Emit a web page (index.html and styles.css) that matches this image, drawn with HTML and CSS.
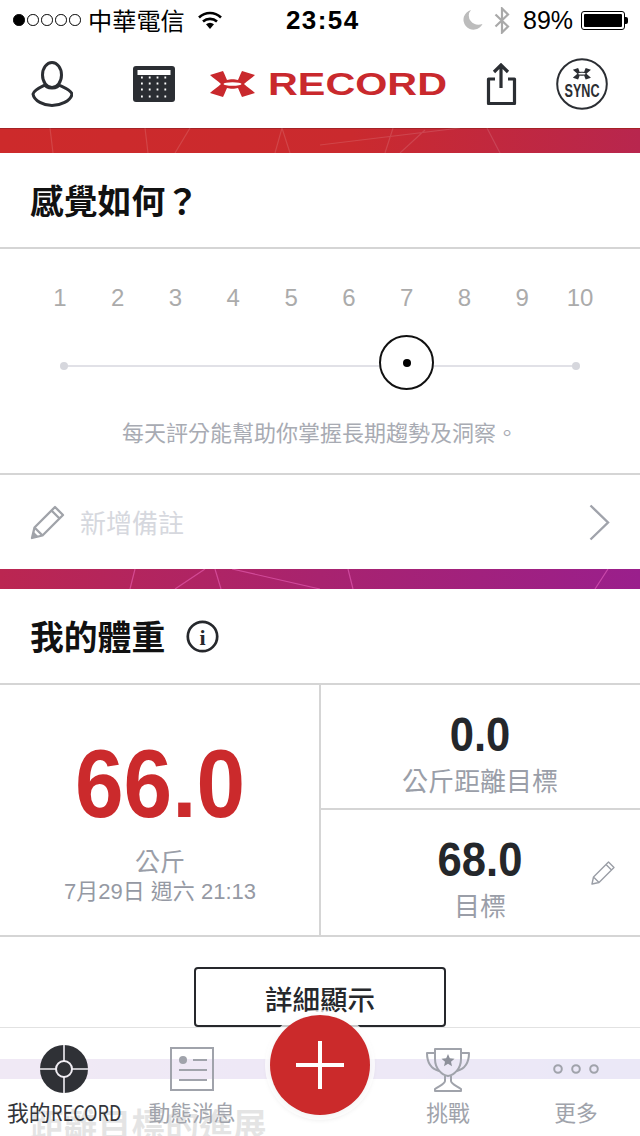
FILE: index.html
```html
<!DOCTYPE html>
<html lang="zh-Hant">
<head>
<meta charset="utf-8">
<title>UA Record</title>
<link rel="stylesheet" href="styles.css">
</head>
<body>
<div class="page">
  <div class="status">
    <div class="dots"><i class="dot on"></i><i class="dot"></i><i class="dot"></i><i class="dot"></i><i class="dot"></i></div>
    <span class="carrier">中華電信</span>
    <svg class="wifi" width="24" height="18" viewBox="0 0 24 18"><path d="M1 6.5C7.5 .5 16.500 .5 23 6.500" fill="none" stroke="#000" stroke-width="2.600"/><path d="M5 10.500C9 7 15 7 19 10.500" fill="none" stroke="#000" stroke-width="2.600"/><path d="M8 13.200C10.500 11.200 13.500 11.200 16 13.200L12 18Z" fill="#000"/></svg>
    <span class="time">23:54</span>
    <svg class="moon" width="20" height="20" viewBox="0 0 20 20"><path d="M8 0A10 10 0 1 0 19.500 14A10 9 0 0 1 8 0Z" fill="#bcbcbc"/></svg>
    <svg class="bt" width="16" height="27" viewBox="0 0 16 27"><path d="M1.500 7.500L14 19.500L8 25.500V1.500L14 7.500L1.500 19.500" fill="none" stroke="#a9a9a9" stroke-width="2.200"/></svg>
    <span class="pct">89%</span>
    <div class="battery"><div class="batt-body"><div class="batt-fill"></div></div><div class="batt-tip"></div></div>
  </div>

  <nav class="nav">
    <svg class="i-person" width="42" height="46" viewBox="0 0 42 46"><ellipse cx="21" cy="14" rx="9.500" ry="12.500" fill="none" stroke="#2b2e33" stroke-width="3"/><path d="M14 24C10 26 3 29 2 33C3 40 13 44.500 21 44.500C29 44.500 40 40 41 33C40 29 32 26 28 24C27 28 15 28 14 24Z" fill="none" stroke="#2b2e33" stroke-width="3" stroke-linejoin="round"/></svg>
    <svg class="i-cal" width="42" height="36" viewBox="0 0 42 36"><rect width="42" height="36" rx="3" fill="#2b2e33"/><rect x="4.500" y="4" width="33" height="5" fill="#fff"/><g stroke="#fff" stroke-width="1.800" stroke-dasharray="1.800 6"><path d="M8 11.500H37"/><path d="M8 17.500H37"/><path d="M8 23.500H37"/><path d="M8 30.500H37"/></g></svg>
    <svg class="logo" width="238" height="26" viewBox="0 0 238 26">
      <path d="M1 4L14 0C16 4 17 7 18 9C21 8 26 8 29 9C30 7 31 4 33 0L46 4C43 7 38 10 35 13C38 16 43 19 46 22L33 26C31 22 30 19 29 17C26 18 21 18 18 17C17 19 16 22 14 26L1 22C4 19 9 16 12 13C9 10 4 7 1 4Z" fill="#c9292d"/>
      <ellipse cx="23.500" cy="13" rx="9" ry="1.800" fill="#fff"/>
      <text class="logo-text" x="59" y="24" textLength="179" lengthAdjust="spacingAndGlyphs">RECORD</text>
    </svg>
    <svg class="i-share" width="31" height="42" viewBox="0 0 31 42"><path d="M9 16H2.500V40.500H28.500V16H22" fill="none" stroke="#2b2e33" stroke-width="3.200" stroke-linejoin="round"/><path d="M15 2V25M8 9L15 2L22 9" fill="none" stroke="#2b2e33" stroke-width="3.200"/></svg>
    <svg class="i-sync" width="52" height="54" viewBox="0 0 52 54">
      <circle cx="26" cy="27" r="24.800" fill="#fff" stroke="#2b2e33" stroke-width="2"/>
      <g transform="translate(16.500 11) scale(.4 .44)"><path d="M1 4L14 0C16 4 17 7 18 9C21 8 26 8 29 9C30 7 31 4 33 0L46 4C43 7 38 10 35 13C38 16 43 19 46 22L33 26C31 22 30 19 29 17C26 18 21 18 18 17C17 19 16 22 14 26L1 22C4 19 9 16 12 13C9 10 4 7 1 4Z" fill="#2b2e33"/><ellipse cx="23.500" cy="13" rx="9" ry="2" fill="#fff"/></g>
      <text class="sync-text" x="26" y="40" text-anchor="middle" textLength="35" lengthAdjust="spacingAndGlyphs">SYNC</text>
    </svg>
  </nav>

  <div class="banner banner-a">
    <svg class="banner-lines" width="640" height="25" viewBox="0 0 640 25"><path d="M50 0L53 25M145 0L148 25M190 0L175 25M282 0L275 25M282 0L290 25M393 0L385 25M425 2L400 25M320 17L460 0M487 0L500 25"/></svg>
  </div>

  <h2 class="title title-rule">感覺如何？</h2>

  <section class="scale">
    <div class="numbers"><span>1</span><span>2</span><span>3</span><span>4</span><span>5</span><span>6</span><span>7</span><span>8</span><span>9</span><span>10</span></div>
    <div class="slider">
      <div class="track"></div>
      <div class="thumb"><i class="thumb-dot"></i></div>
    </div>
    <p class="hint">每天評分能幫助你掌握長期趨勢及洞察。</p>
  </section>

  <div class="note">
    <svg class="i-pencil" width="36" height="36" viewBox="0 0 36 36"><path d="M2 34L4.500 23.500L25 3L33 11L12.500 31.500Z M4.500 23.500L12.500 31.500 M21.500 6.500L29.500 14.500" fill="none" stroke="#a0a3a9" stroke-width="2.300" stroke-linejoin="round"/><path d="M2 34L3.500 27.500L8.500 32.500Z" fill="#a0a3a9"/></svg>
    <span class="note-text">新增備註</span>
    <svg class="i-chev" width="21" height="37" viewBox="0 0 21 37"><path d="M1.500 1.500L19 18.500L1.500 35.500" fill="none" stroke="#a0a3ab" stroke-width="2.400"/></svg>
  </div>

  <div class="banner banner-b">
    <svg class="banner-lines" width="640" height="20" viewBox="0 0 640 20"><path d="M135 0L130 20M205 0L175 20M215 0L221 20M232 0L320 20M348 0L353 20M608 0L595 20"/></svg>
  </div>

  <div class="title title-rule title-row">
    <h2 class="title-text">我的體重</h2>
    <svg class="i-info" width="33" height="33" viewBox="0 0 33 33"><circle cx="16.500" cy="16.500" r="14.700" fill="none" stroke="#26282c" stroke-width="2.700"/><text class="info-i" x="16.500" y="25" text-anchor="middle">i</text></svg>
  </div>

  <section class="stats">
    <div class="stat-main">
      <div class="big">66.0</div>
      <div class="unit">公斤</div>
      <div class="date">7月29日 週六 21:13</div>
    </div>
    <div class="stat-side">
      <div class="stat-cell stat-cell-top">
        <div class="mid">0.0</div>
        <div class="label">公斤距離目標</div>
      </div>
      <div class="stat-cell">
        <div class="mid">68.0</div>
        <div class="label">目標</div>
        <svg class="i-pencil-sm" width="24" height="24" viewBox="0 0 24 24"><path d="M1 23L2.500 16L17.500 1L23 6.500L8 21.500Z M2.500 16L8 21.500 M15 3.500L20.500 9" fill="none" stroke="#9a9ea6" stroke-width="1.400" stroke-linejoin="round"/></svg>
      </div>
    </div>
  </section>

  <div class="btn-wrap"><div class="btn">詳細顯示</div></div>

  <div class="banner banner-c"></div>
  <h2 class="title title-next">距離目標的進展</h2>

  <div class="tabbar">
    <div class="tab tab-active">
      <svg width="48" height="48" viewBox="0 0 48 48"><circle cx="24" cy="24" r="24" fill="#2f3136"/><path d="M24 0V48M0 24H48" stroke="#f1eef4" stroke-width="1.600"/><circle cx="24" cy="24" r="8" fill="#2f3136" stroke="#f1eef4" stroke-width="2"/></svg>
      <span class="tab-label">我的<span class="narrow">RECORD</span></span>
    </div>
    <div class="tab">
      <svg width="44" height="48" viewBox="0 0 44 48"><rect x="1" y="3" width="42" height="42" fill="none" stroke="#a0a3ab" stroke-width="2"/><circle cx="13" cy="15" r="4" fill="#a0a3ab"/><path d="M23 15H37M9 25H37M9 35H37" stroke="#a0a3ab" stroke-width="1.800"/></svg>
      <span class="tab-label">動態消息</span>
    </div>
    <div class="tab tab-spacer"></div>
    <div class="tab">
      <svg width="46" height="48" viewBox="0 0 46 48"><path d="M10 4H36V14C36 24 29 30 23 31C17 30 10 24 10 14Z M10 8H2C2 18 7 24 14 26 M36 8H44C44 18 39 24 32 26 M20 31V36C20 39 14 41 10 44V46H36V44C32 41 26 39 26 36V31" fill="none" stroke="#a0a3ab" stroke-width="2" stroke-linejoin="round"/><path d="M23 9L24.800 13.300L29.500 13.700L26 16.700L27 21.200L23 18.800L19 21.200L20 16.700L16.500 13.700L21.200 13.300Z" fill="#8d909a"/></svg>
      <span class="tab-label">挑戰</span>
    </div>
    <div class="tab">
      <svg width="46" height="48" viewBox="0 0 46 48"><g fill="none" stroke="#a0a3ab" stroke-width="2"><circle cx="5" cy="24" r="3.800"/><circle cx="23" cy="24" r="3.800"/><circle cx="41" cy="24" r="3.800"/></g></svg>
      <span class="tab-label">更多</span>
    </div>
    <div class="fab">
      <svg width="48" height="48" viewBox="0 0 48 48"><path d="M24 0V48M0 24H48" stroke="#fff" stroke-width="4"/></svg>
    </div>
  </div>
</div>
</body>
</html>
```
FILE: styles.css
```css
* { box-sizing: border-box; }
html, body { margin: 0; padding: 0; background: #fff; }
body { font-family: "Noto Sans CJK TC", "Liberation Sans", sans-serif; color: #111; }
.page { position: relative; width: 640px; height: 1136px; overflow: hidden; background: #fff; }

/* status bar */
.status { display: flex; align-items: center; height: 40px; padding-left: 13px; }
.dots { display: flex; gap: 2.500px; }
.dot { display: block; width: 11.500px; height: 11.500px; border: 1.300px solid #000; border-radius: 50%; }
.dot.on { background: #000; }
.carrier { margin-left: 7.500px; width: 97px; font-size: 24.200px; line-height: 40px; color: #000; white-space: nowrap; }
.wifi { margin-left: 13px; }
.time { margin-left: 64px; width: 74px; font: 700 26px/40px "Liberation Sans", sans-serif; color: #000; letter-spacing: 1.400px; white-space: nowrap; }
.moon { margin-left: 103px; }
.bt { margin-left: 11px; }
.pct { margin-left: 13px; width: 51px; font: 400 25px/40px "Liberation Sans", sans-serif; color: #000; white-space: nowrap; }
.battery { display: flex; align-items: center; margin-left: 7px; }
.batt-body { width: 44px; height: 19px; padding: 2px; border: 1px solid #000; border-radius: 3px; }
.batt-fill { width: 38px; height: 13px; background: #000; border-radius: 1px; }
.batt-tip { width: 3px; height: 7px; background: #000; border-radius: 0 2px 2px 0; }

/* nav */
.nav { display: flex; align-items: center; height: 88px; padding-left: 31px; }
.i-cal { margin-left: 60px; }
.logo { margin-left: 34px; }
.logo-text { font: 700 31px "Liberation Sans", sans-serif; fill: #c9292d; }
.i-share { margin-left: 39px; }
.i-sync { margin-left: 39px; }
.sync-text { font: 700 19px "Liberation Sans", sans-serif; fill: #2b2e33; }

/* banners */
.banner { position: relative; }
.banner-a { height: 25px; background: linear-gradient(90deg, #cd2a2b 0%, #ca2a2e 55%, #b8264e 100%); border-top: 1px solid #a52226; }
.banner-b { height: 20px; background: linear-gradient(90deg, #bb2651 0%, #a8236f 50%, #9a1f8c 100%); }
.banner-c { height: 20px; margin-top: 32px; background: linear-gradient(90deg, #7a37a3 0%, #482fb4 100%); }
.banner-lines { display: block; position: absolute; left: 0; top: 0; fill: none; stroke: rgba(255,255,255,.13); stroke-width: 1.200px; }
.banner-a .banner-lines { top: -1px; }
.banner-b .banner-lines { stroke: rgba(255,120,210,.45); }

/* titles */
.title { margin: 0; padding-left: 30px; font-size: 33.800px; font-weight: 700; line-height: 94px; height: 96px; color: #111; white-space: nowrap; }
.title-rule { border-bottom: 2px solid #d5d5d5; }
.title-row { display: flex; align-items: center; }
.title-text { margin: 0; font: inherit; }
.i-info { margin-left: 21px; }
.info-i { font: 700 22px "Liberation Serif", serif; fill: #26282c; }
.title-next { height: auto; line-height: 60px; margin-top: 15px; }

/* scale */
.scale { height: 226px; padding-top: 36px; border-bottom: 2px solid #d5d5d5; }
.numbers { display: grid; grid-template-columns: repeat(10, 1fr); padding: 0 31px; font: 400 24px/26px "Liberation Sans", sans-serif; color: #ababab; text-align: center; }
.slider { position: relative; height: 56px; margin: 23px 60px 0; }
.track { position: relative; top: 31px; height: 2px; margin: 0 4px; background: #e1e1e7; }
.track::before, .track::after { content: ""; position: absolute; top: -3px; width: 8px; height: 8px; border-radius: 50%; background: #d6d7dd; }
.track::before { left: -4px; }
.track::after { right: -4px; }
.thumb { position: absolute; left: 319px; top: 1px; display: flex; align-items: center; justify-content: center; width: 55px; height: 55px; border: 2.500px solid #111; border-radius: 50%; background: #fff; }
.thumb-dot { display: block; width: 8px; height: 8px; border-radius: 50%; background: #000; }
.hint { margin: 26px 0 0; padding-left: 122px; font-size: 22px; line-height: 30px; color: #a8abb3; white-space: nowrap; }

/* note */
.note { display: flex; align-items: center; height: 94px; padding-left: 30px; }
.note-text { margin-left: 14px; font-size: 26px; line-height: 36px; color: #d6d8de; }
.i-chev { margin-left: auto; margin-right: 30px; }

/* stats */
.stats { display: grid; grid-template-columns: 321px 1fr; height: 252px; border-bottom: 2px solid #d5d5d5; }
.stat-main { padding: 49px 0 0 1px; border-right: 2px solid #d5d5d5; text-align: center; }
.big { font: 700 96px/100px "Liberation Sans", sans-serif; color: #cb2a2c; transform: scaleX(.91); white-space: nowrap; }
.unit { margin-top: 11px; font-size: 25px; line-height: 30px; color: #9a9ea8; }
.date { margin-top: 2px; font: 400 22px/30px "Liberation Sans", "Noto Sans CJK TC", sans-serif; color: #9599a3; white-space: nowrap; }
.stat-side { display: grid; grid-template-rows: 125px 1fr; }
.stat-cell { position: relative; padding: 21px 1px 0 0; text-align: center; }
.stat-cell-top { border-bottom: 2px solid #d5d5d5; }
.mid { font: 700 49px/56px "Liberation Sans", sans-serif; color: #24272b; transform: scaleX(.89); white-space: nowrap; }
.label { font-size: 26px; line-height: 36px; color: #9a9ea8; white-space: nowrap; }
.i-pencil-sm { position: absolute; left: 270px; top: 51px; }

/* button */
.btn-wrap { display: flex; justify-content: center; padding-top: 30px; }
.btn { width: 252px; height: 60px; border: 2px solid #26282c; border-radius: 4px; font-size: 27.500px; font-weight: 500; line-height: 58px; text-align: center; color: #26282c; }

/* tab bar */
.tabbar { position: absolute; left: 0; bottom: 0; display: grid; grid-template-columns: repeat(5, 128px); width: 640px; height: 109px; padding-top: 17px; background: rgba(255,255,255,.89); border-top: 1px solid #e2e2e2; }
.tab { display: flex; flex-direction: column; align-items: center; height: 92px; }
.tab svg { display: block; flex: none; }
.tab-label { margin-top: 4px; font-size: 21.800px; line-height: 30px; color: #a0a3ab; white-space: nowrap; }
.tab-active .tab-label { color: #33353a; }
.narrow { display: inline-block; margin-right: -14.500px; transform: scaleX(.83); transform-origin: left center; }
.fab { position: absolute; left: 270px; top: -13px; display: flex; align-items: center; justify-content: center; width: 100px; height: 100px; border-radius: 50%; background: #cb2a2b; box-shadow: 0 0 0 5px rgba(255,255,255,.75), 0 2px 7px rgba(0,0,0,.22); }
```
